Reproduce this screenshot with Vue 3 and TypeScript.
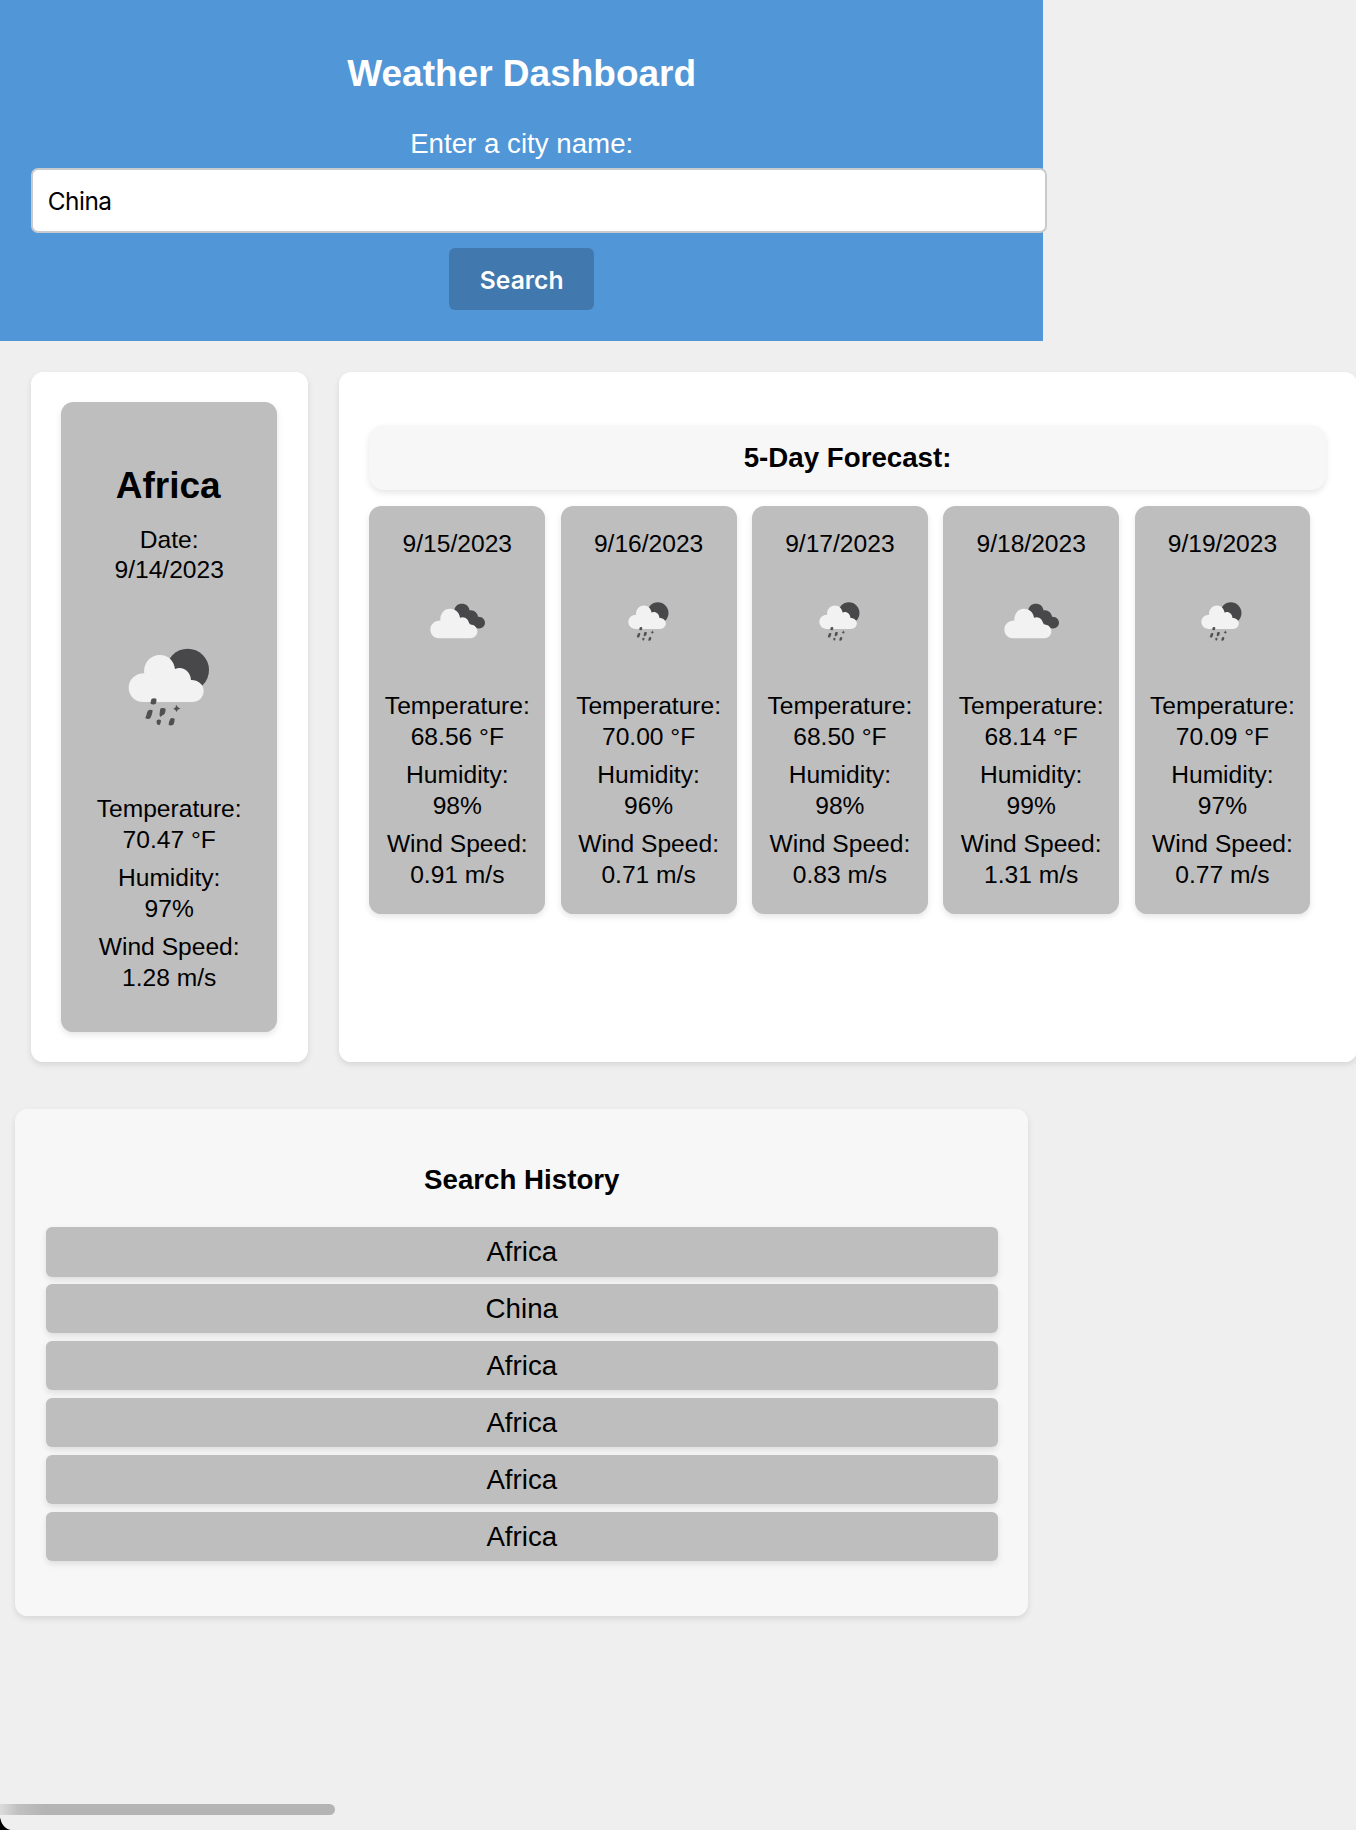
<script setup lang="ts">
import { ref } from 'vue'

type Sky = 'rain' | 'clouds'

interface Reading {
  date: string
  sky: Sky
  temperature: string
  humidity: string
  wind: string
}

const city = ref('China')

const current: Reading = { date: '9/14/2023', sky: 'rain', temperature: '70.47 °F', humidity: '97%', wind: '1.28 m/s' }

const forecast: Reading[] = [
  { date: '9/15/2023', sky: 'clouds', temperature: '68.56 °F', humidity: '98%', wind: '0.91 m/s' },
  { date: '9/16/2023', sky: 'rain', temperature: '70.00 °F', humidity: '96%', wind: '0.71 m/s' },
  { date: '9/17/2023', sky: 'rain', temperature: '68.50 °F', humidity: '98%', wind: '0.83 m/s' },
  { date: '9/18/2023', sky: 'clouds', temperature: '68.14 °F', humidity: '99%', wind: '1.31 m/s' },
  { date: '9/19/2023', sky: 'rain', temperature: '70.09 °F', humidity: '97%', wind: '0.77 m/s' },
]

const history = ref(['Africa', 'China', 'Africa', 'Africa', 'Africa', 'Africa'])
</script>

<template>
  <div class="page">
    <!-- Shared icon shapes -->
    <svg class="defs" width="0" height="0" aria-hidden="true">
      <symbol id="rain" viewBox="0 0 360 330">
        <circle cx="233" cy="120" r="64" fill="#48484a" />
        <path
          fill="#f2f2f2"
          d="M100 216C75 216 56 197 56 173C56 149 76 130 103 130C99 99 122 75 150 75C174 75 192 92 195 117C218 106 242 124 243 150C262 149 281 162 281 182C281 202 266 216 246 216Z"
        />
        <g fill="#505052">
          <path d="M125 206Q132 203 139 206Q141 214 137 222Q129 225 122 221Q121 213 125 206Z" />
          <path d="M115 241Q122 238 128 241Q128 251 121 265Q113 269 106 264Q109 256 110 253Q111 246 115 241Z" />
          <path d="M152 235Q160 232 167 236Q167 246 163 253Q156 257 151 261Q147 256 149 249Q149 241 152 235Z" />
          <path d="M198 224L203 231L211 236L203 239L200 246L196 240L190 236L197 232Z" />
          <path d="M141 270Q147 267 153 271Q153 279 149 285Q144 286 141 282Q138 276 141 270Z" />
          <path d="M181 266Q188 262 194 267Q194 277 190 284Q183 288 176 285Q176 275 181 266Z" />
        </g>
      </symbol>
      <symbol id="clouds" viewBox="23 7.5 180 165">
        <path
          fill="#48484a"
          d="M105 62C105 48 115 40 128 40C140 40 149 48 151 60C163 57 175 67 176 79C188 78 197 87 197 97C197 107 189 114 179 114C168 114 160 108 150 98L122 84Z"
        />
        <path
          fill="#f2f2f2"
          d="M58 143C43 143 33 131 33 117C33 102 45 90 63 90C62 69 75 55 92 55C108 55 120 66 122 82C136 76 149 87 150 102C164 101 174 110 174 122C174 134 165 143 153 143Z"
        />
      </symbol>
    </svg>

    <header class="header">
      <h1>Weather Dashboard</h1>
      <label for="city">Enter a city name:</label>
      <input id="city" v-model="city" type="text" />
      <button type="button">Search</button>
    </header>

    <main class="weather">
      <section class="panel today">
        <div class="card current">
          <h2>Africa</h2>
          <p class="date">Date:<br />{{ current.date }}</p>
          <svg class="icon-large"><use :href="'#' + current.sky" /></svg>
          <div class="stats">
            <p>Temperature:<br />{{ current.temperature }}</p>
            <p>Humidity:<br />{{ current.humidity }}</p>
            <p>Wind Speed:<br />{{ current.wind }}</p>
          </div>
        </div>
      </section>

      <section class="panel outlook">
        <h3 class="outlook-title">5-Day Forecast:</h3>
        <div class="days">
          <article v-for="day in forecast" :key="day.date" class="card day">
            <p>{{ day.date }}</p>
            <svg class="icon-small"><use :href="'#' + day.sky" /></svg>
            <div class="stats">
              <p>Temperature:<br />{{ day.temperature }}</p>
              <p>Humidity:<br />{{ day.humidity }}</p>
              <p>Wind Speed:<br />{{ day.wind }}</p>
            </div>
          </article>
        </div>
      </section>
    </main>

    <section class="history">
      <h3>Search History</h3>
      <ul>
        <li v-for="(item, i) in history" :key="i">{{ item }}</li>
      </ul>
    </section>

    <div class="corner"></div>
    <div class="scroll-thumb"></div>
  </div>
</template>

<style>
body {
  margin: 0;
  background: #efefef;
}
</style>

<style scoped>
.page {
  position: relative;
  box-sizing: border-box;
  width: 1356px;
  height: 1830px;
  overflow: hidden;
  background: #efefef;
  color: #000;
  font-family: "Liberation Sans", Arial, sans-serif;
  font-size: 24.6px;
  line-height: 30.8px;
  text-align: center;
}
.defs {
  position: absolute;
}
h1,
h2,
h3,
p,
ul {
  margin: 0;
  padding: 0;
}

.header {
  box-sizing: border-box;
  display: flex;
  flex-direction: column;
  align-items: center;
  width: 1043.4px;
  height: 340.7px;
  padding: 53.2px 30.8px 0;
  background: #5196d6;
  color: #fff;
}
h1 {
  font-size: 37px;
  line-height: 42px;
}
label {
  margin-top: 32.7px;
  font-size: 27.7px;
  line-height: 31px;
}
input {
  box-sizing: border-box;
  align-self: flex-start;
  width: 1015.8px;
  height: 65px;
  margin: 9.1px 0 0;
  padding: 2px 15px 0;
  border: 2px solid #c8cbce;
  border-radius: 7px;
  background: #fff;
  color: #000;
  font: 24.4px Inter, sans-serif;
  letter-spacing: -0.5px;
  outline: none;
}
button {
  width: 144.6px;
  height: 62px;
  margin: 15px 0 0;
  padding: 2px 0 0;
  border: 0;
  border-radius: 6px;
  background: #4178ad;
  color: #fff;
  font: 600 24.66px Inter, sans-serif;
}

.weather {
  display: flex;
  gap: 30.8px;
  margin: 31px 0 0 30.6px;
  height: 690.7px;
}
.panel {
  box-sizing: border-box;
  flex: none;
  padding: 30.8px;
  border-radius: 12.3px;
  background: #fff;
  box-shadow: 0 3px 6px rgba(0, 0, 0, 0.1);
}
.today {
  width: 277.2px;
}
.outlook {
  width: 1018px;
}
.card {
  box-sizing: border-box;
  display: flex;
  flex-direction: column;
  align-items: center;
  border-radius: 12.3px;
  background: #bebebe;
  box-shadow: 0 3px 6px rgba(0, 0, 0, 0.1);
}
.current {
  height: 629.5px;
  padding-top: 63px;
}
h2 {
  margin-left: -2px;
  font-size: 37px;
  line-height: 42px;
}
.date {
  margin-top: 17.2px;
  line-height: 30px;
}
.icon-large {
  width: 120px;
  height: 110px;
  margin: 45.3px 0 53.8px 1px;
}
.stats {
  display: flex;
  flex-direction: column;
  gap: 7.6px;
  white-space: nowrap;
}

.outlook-title {
  margin-top: 22.5px;
  border-radius: 15.4px;
  background: #f7f7f7;
  box-shadow: 0 3px 6px rgba(0, 0, 0, 0.1);
  font-size: 27.7px;
  line-height: 65px;
}
.days {
  display: flex;
  gap: 15.4px;
  margin-top: 15.6px;
}
.day {
  flex: none;
  width: 175.9px;
  height: 408px;
  padding-top: 23.3px;
}
.icon-small {
  width: 60px;
  height: 55px;
  margin: 32.9px 0 43.3px;
}

.history {
  box-sizing: border-box;
  width: 1012.8px;
  height: 507.8px;
  margin: 46.2px 0 0 15.4px;
  padding: 55.5px 30.6px 0;
  border-radius: 12.3px;
  background: #f7f7f7;
  box-shadow: 0 3px 6px rgba(0, 0, 0, 0.1);
  font-size: 27.7px;
}
.history h3 {
  font-size: 27.7px;
  line-height: 31px;
}
.history ul {
  display: flex;
  flex-direction: column;
  gap: 7.7px;
  margin-top: 32.3px;
  list-style: none;
}
.history li {
  height: 49.2px;
  border-radius: 6.2px;
  background: #bebebe;
  box-shadow: 0 3px 6px rgba(0, 0, 0, 0.1);
  line-height: 50.4px;
}

/* Window chrome over the page: rounded corner and overlay scrollbar */
.corner {
  position: absolute;
  left: 0;
  bottom: 0;
  width: 12px;
  height: 15px;
  background: radial-gradient(ellipse 12px 15px at 100% 0, transparent 97%, #000 103%);
}
.scroll-thumb {
  position: absolute;
  left: 0;
  bottom: 15px;
  width: 335px;
  height: 11.3px;
  border-radius: 0 5.7px 5.7px 0;
  background: linear-gradient(90deg, #dcdcdc 0, #c0c0c0 18px, #b4b4b4 45px);
}
</style>
